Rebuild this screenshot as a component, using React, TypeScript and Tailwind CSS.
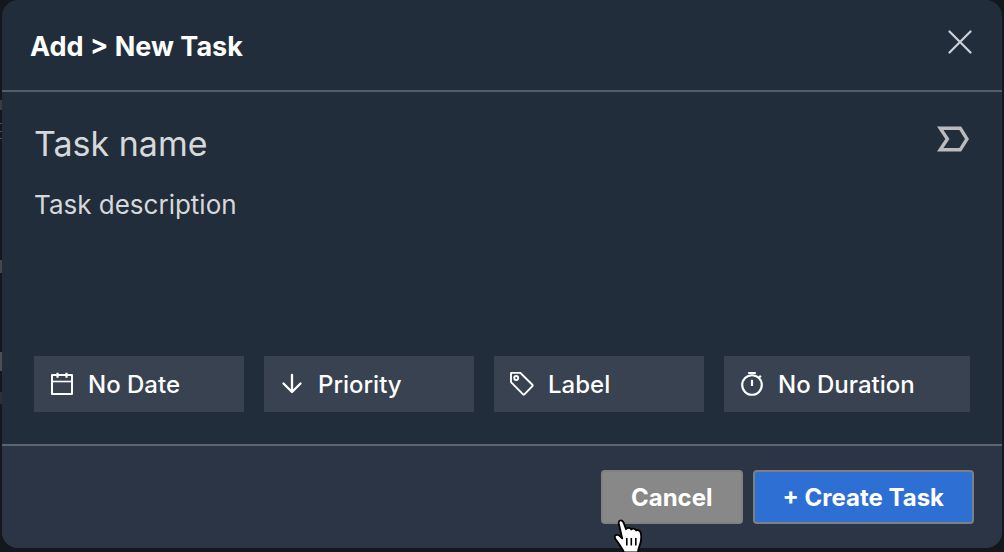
import type { ReactNode } from "react";

function CloseIcon() {
  return (
    <svg className="size-6" viewBox="0 0 24 24" fill="none" stroke="currentColor" strokeWidth="2.2" strokeLinecap="round" aria-hidden="true">
      <path d="M1.5 1.5l21 21M22.5 1.5l-21 21" />
    </svg>
  );
}

function ImportantIcon() {
  return (
    <svg className="h-[26px] w-8" viewBox="0 0 32 26" fill="none" stroke="currentColor" strokeWidth="3.4" aria-hidden="true">
      <path d="M3.2 2.2h20L30 13l-6.8 10.8h-20L10.4 13z" />
    </svg>
  );
}

function CalendarIcon() {
  return (
    <svg className="size-6" viewBox="0 0 24 24" fill="none" stroke="currentColor" strokeWidth="2" strokeLinejoin="round" aria-hidden="true">
      <path d="M2 3h20v19H2z" />
      <path d="M2 9.5h20" strokeWidth="1.6" />
      <path d="M7.5.8v5M16.5.8v5" strokeWidth="2.2" />
    </svg>
  );
}

function ArrowIcon() {
  return (
    <svg className="size-6" viewBox="0 0 24 24" fill="none" stroke="currentColor" strokeWidth="2.3" strokeLinecap="round" strokeLinejoin="round" aria-hidden="true">
      <path d="M12 3v17M3.5 11.5L12 20l8.5-8.5" />
    </svg>
  );
}

function TagIcon() {
  return (
    <svg className="size-6" viewBox="0 0 24 24" fill="none" stroke="currentColor" strokeWidth="1.9" strokeLinejoin="round" aria-hidden="true">
      <path d="M1 1.4Q1 .8 1.8.8h8.4l12.2 12q.6.7 0 1.3l-8 8.2q-.7.6-1.3 0L1 10.2z" />
      <circle cx="6.2" cy="6" r="2" />
    </svg>
  );
}

function TimerIcon() {
  return (
    <svg className="size-6" viewBox="0 0 24 24" fill="none" stroke="currentColor" strokeWidth="2.1" aria-hidden="true">
      <circle cx="12" cy="13" r="9.8" />
      <path d="M8.2 0.9h7.6M12 7.8v6.2M18.6 6l2.2-2.2" strokeWidth="2.2" />
    </svg>
  );
}

function PointerCursor() {
  return (
    <svg className="pointer-events-none absolute left-[612px] top-[519px] h-[33px] w-8" viewBox="0 0 32 33" fill="#fff" stroke="#000" strokeWidth="1.8" strokeLinejoin="round" aria-hidden="true">
      <path d="M12 33.5c-.7-2.8-2.8-4.6-4.2-7.2-1.2-2.2-2.6-4-4-5.8-1.4-1.8-1.3-3.4-.2-4.2 1.5-.9 3.4-.2 4.8 1.3l1.8 1.8L7.2 6.3C6.3 3.7 6.6 2 8.2 1.5c1.9-.5 3 .9 3.9 3.4l1.9 5.3c.9-1.9 4.4-1.7 5.2.3 1.1-1.5 4.1-1 4.9.9 1.6-1 4 .1 4.5 2 .9 3.3.7 7-.1 10.3-.7 3-2.3 5.5-2.6 9.8z" />
      <path d="M14.8 19v7.4M19.3 19v7.4M23.8 19v7.4" fill="none" strokeWidth="1.6" />
    </svg>
  );
}

function OptionButton({ icon, children }: { icon: ReactNode; children: ReactNode }) {
  return (
    <button type="button" className="flex h-14 items-center gap-[14px] bg-[#384250] px-4 text-2xl font-medium text-white">
      {icon}
      <span className="pt-0.5">{children}</span>
    </button>
  );
}

function PageEdge() {
  return (
    <div className="absolute inset-y-0 left-0 w-0.5" aria-hidden="true">
      <div className="flex flex-col pt-[100px]">
        <div className="h-[10px] bg-[#3a3d42]" />
        <div className="mt-[13px] h-px bg-[#4a4d52]" />
        <div className="mt-[7px] h-px bg-[#4a4d52]" />
        <div className="mt-[6px] h-px bg-[#4a4d52]" />
        <div className="mt-[121px] h-[13px] bg-[#44474b]" />
        <div className="mt-[79px] h-[19px] bg-[#4c4f53]" />
        <div className="mt-[21px] h-3 bg-[#2c3036]" />
      </div>
    </div>
  );
}

export default function App() {
  return (
    <main className="relative min-h-screen overflow-hidden bg-[#14181e] px-0.5 pb-1 font-['Inter',sans-serif]">
      <PageEdge />
      <form className="relative overflow-hidden rounded-2xl bg-[#222d3c]" onSubmit={(e) => e.preventDefault()}>
        <header className="flex h-[92px] items-center justify-between border-b-2 border-[#535d6a] px-7">
          <h1 className="pt-1 text-[27px] font-bold leading-9 text-white">Add &gt; New Task</h1>
          <button type="button" aria-label="Close" className="mr-0.5 pb-1.5 text-[#cdd0da]">
            <CloseIcon />
          </button>
        </header>

        <div className="px-8 pb-8 pt-7">
          <div className="flex items-start justify-between">
            <input
              aria-label="Task name"
              placeholder="Task name"
              className="h-12 min-w-0 flex-1 bg-transparent pb-0.5 text-[34px] text-white outline-none placeholder:text-[#d6d8da]"
            />
            <button type="button" aria-label="Mark as important" className="mr-px mt-1.5 text-[#b9bbbe]">
              <ImportantIcon />
            </button>
          </div>
          <textarea
            aria-label="Task description"
            placeholder="Task description"
            rows={4}
            className="mt-[21px] block w-full resize-none bg-transparent text-[26px] leading-8 text-white outline-none placeholder:text-[#d6d8da]"
          />
          <div className="mt-[39px] grid grid-cols-[210fr_210fr_210fr_246fr] gap-5">
            <OptionButton icon={<CalendarIcon />}>No Date</OptionButton>
            <OptionButton icon={<ArrowIcon />}>Priority</OptionButton>
            <OptionButton icon={<TagIcon />}>Label</OptionButton>
            <OptionButton icon={<TimerIcon />}>No Duration</OptionButton>
          </div>
        </div>

        <footer className="flex justify-end gap-[10px] border-t-2 border-[#5c6571] bg-[#2b3546] px-7 py-6 text-2xl font-bold text-white">
          <button type="button" className="h-[54px] rounded border-2 border-[#818181] bg-[#888] px-7 pt-0.5">
            Cancel
          </button>
          <button type="submit" className="h-[54px] rounded border-2 border-[#7c8085] bg-[#2d6fd2] px-7 pt-0.5">
            + Create Task
          </button>
        </footer>
      </form>
      <PointerCursor />
    </main>
  );
}
